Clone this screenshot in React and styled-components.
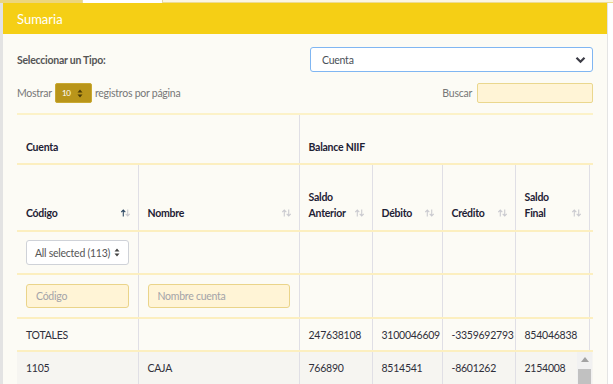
import React from 'react'
import styled, { createGlobalStyle } from 'styled-components'

const GlobalStyle = createGlobalStyle`
	html, body {
		margin: 0;
		padding: 0;
		background: #ffffff;
	}
	body {
		font-family: Lato, "Open Sans", sans-serif;
		font-size: 11px;
		letter-spacing: -0.25px;
		color: #333;
	}
	* { box-sizing: border-box; }
`

const columns = [121, 161, 73, 70, 73, 74, 4]

const SortIcon = ({ active }) => (
	<Sort viewBox="0 0 12 9" width="11" height="8">
		<path d="M3.5 8.5V1.2M1.2 3.5l2.3-2.3 2.3 2.3" fill="none" stroke={active ? '#2b4561' : '#c9c9cf'} strokeWidth="1.2" />
		<path d="M8.5 0.5v7.3M6.2 5.5l2.3 2.3 2.3-2.3" fill="none" stroke="#c9c9cf" strokeWidth="1.2" />
	</Sort>
)

const Chevron = () => (
	<svg width="11" height="8" viewBox="0 0 11 8">
		<path d="M1.5 1.8l4 4 4-4" fill="none" stroke="#3c3c46" strokeWidth="2.2" />
	</svg>
)

const UpDown = ({ color }) => (
	<svg width="6" height="9" viewBox="0 0 6 9">
		<path d="M3 0.5L5.5 3.5H0.5z M3 8.5L5.5 5.5H0.5z" fill={color} />
	</svg>
)

const rows = [
	{ code: 'TOTALES', name: '', prev: '247638108', debit: '3100046609', credit: '-3359692793', final: '854046838' },
	{ code: '1105', name: 'CAJA', prev: '766890', debit: '8514541', credit: '-8601262', final: '2154008', striped: true }
]

const App = () => {
	return (
		<Page>
			<GlobalStyle />
			<TopTabs>
				<TabFill />
				<Tab />
				<TabRest />
			</TopTabs>
			<Panel>
				<Header>Sumaria</Header>
				<Body>
					<TypeRow>
						<Label>Seleccionar un Tipo:</Label>
						<TypeSelect>
							<span>Cuenta</span>
							<Chevron />
						</TypeSelect>
					</TypeRow>
					<ToolsRow>
						<Muted>
							Mostrar
							<PageSize>
								10
								<UpDown color="#4a3b05" />
							</PageSize>
							registros por página
						</Muted>
						<Muted>
							Buscar
							<SearchInput />
						</Muted>
					</ToolsRow>
					<TableWrap>
						<Table>
							<colgroup>
								{columns.map((w, i) => (
									<Col key={i} $w={w} />
								))}
							</colgroup>
							<thead>
								<tr>
									<GroupTh colSpan={2}>Cuenta</GroupTh>
									<GroupTh colSpan={5}>Balance NIIF</GroupTh>
								</tr>
								<tr>
									<Th><ThInner>Código<SortIcon active /></ThInner></Th>
									<Th><ThInner>Nombre<SortIcon /></ThInner></Th>
									<Th><ThInner>Saldo<br />Anterior<SortIcon /></ThInner></Th>
									<Th><ThInner>Débito<SortIcon /></ThInner></Th>
									<Th><ThInner>Crédito<SortIcon /></ThInner></Th>
									<Th><ThInner>Saldo<br />Final<SortIcon /></ThInner></Th>
									<Spacer />
								</tr>
							</thead>
							<tbody>
								<FilterRow>
									<Td>
										<MultiSelect>
											All selected (113)
											<UpDown color="#444" />
										</MultiSelect>
									</Td>
									<Td />
									<Td />
									<Td />
									<Td />
									<Td />
									<Spacer />
								</FilterRow>
								<FilterRow $tall>
									<Td><FilterInput placeholder="Código" /></Td>
									<Td><FilterInput placeholder="Nombre cuenta" /></Td>
									<Td />
									<Td />
									<Td />
									<Td />
									<Spacer />
								</FilterRow>
								{rows.map((r) => (
									<DataRow key={r.code} $striped={r.striped}>
										<Td>{r.code}</Td>
										<Td>{r.name}</Td>
										<Td>{r.prev}</Td>
										<Td>{r.debit}</Td>
										<Td>{r.credit}</Td>
										<Td>{r.final}</Td>
										<Spacer />
									</DataRow>
								))}
							</tbody>
						</Table>
						<ScrollBar>
							<ScrollArrow />
							<ScrollThumb />
						</ScrollBar>
					</TableWrap>
				</Body>
			</Panel>
		</Page>
	)
}

export default App

const Page = styled.div`
	width: 613px;
	height: 384px;
	overflow: hidden;
	background: #ffffff;
`

const TopTabs = styled.div`
	display: flex;
	height: 3px;
`

const TabFill = styled.div`
	width: 82px;
	background: #ecd67e;
`

const Tab = styled.div`
	width: 81px;
	background: #ffffff;
	border-left: 1px solid #e6d9a4;
	border-right: 1px solid #e6d9a4;
`

const TabRest = styled.div`
	flex: 1;
	background: #fbf6e2;
	border-bottom: 1px solid #eddc93;
`

const Panel = styled.div`
	width: 608px;
	height: 381px;
	border-left: 3px solid #e3e3e3;
	border-right: 1px solid #e4e4e4;
	background: #fcfbf5;
`

const Header = styled.div`
	height: 31px;
	background: #f5cf15;
	color: #ffffff;
	font-size: 13px;
	letter-spacing: 0;
	display: flex;
	align-items: center;
	padding-left: 14px;
`

const Body = styled.div`
	padding: 13px 14px 0 14px;
`

const TypeRow = styled.div`
	display: flex;
	justify-content: space-between;
	align-items: center;
	height: 25px;
`

const Label = styled.div`
	font-weight: 700;
	color: #555;
	font-size: 10.5px;
`

const TypeSelect = styled.div`
	width: 283px;
	height: 25px;
	background: #ffffff;
	border: 1px solid #80b6f2;
	border-radius: 3px;
	display: flex;
	align-items: center;
	justify-content: space-between;
	padding: 0 6px 0 11px;
	color: #495057;
	font-size: 10.5px;
`

const ToolsRow = styled.div`
	display: flex;
	justify-content: space-between;
	align-items: center;
	margin-top: 11px;
	height: 20px;
`

const Muted = styled.div`
	display: flex;
	align-items: center;
	gap: 3px;
	color: #777;
	font-size: 10.5px;
`

const PageSize = styled.div`
	width: 37px;
	height: 20px;
	background: #b9951a;
	border: 1px solid #c9a933;
	border-radius: 2px;
	color: #ffffff;
	font-size: 8px;
	display: flex;
	align-items: center;
	justify-content: space-between;
	padding: 0 8px 0 6px;
`

const SearchInput = styled.div`
	width: 116px;
	height: 20px;
	margin-left: 2px;
	background: #fff4d6;
	border: 1px solid #ead78e;
	border-radius: 2px;
`

const TableWrap = styled.div`
	position: relative;
	margin-top: 10px;
`

const Table = styled.table`
	width: 576px;
	table-layout: fixed;
	border-collapse: collapse;
	border-top: 2px solid #fcf2c8;
`

const Col = styled.col`
	width: ${({ $w }) => $w}px;
`

const GroupTh = styled.th`
	height: 50px;
	text-align: left;
	vertical-align: bottom;
	padding: 0 9px 10px;
	font-weight: 700;
	color: #1e2134;
	font-size: 10.5px;
	border-bottom: 2px solid #fcefc0;
	border-right: 1px solid #e0dfe5;
	&:last-child { border-right: none; }
`

const Th = styled.th`
	height: 67px;
	text-align: left;
	vertical-align: bottom;
	padding: 0 8px 9px 9px;
	font-weight: 700;
	color: #1e2134;
	font-size: 10.5px;
	line-height: 16px;
	border-bottom: 2px solid #fcefc0;
	border-right: 1px solid #e0dfe5;
`

const ThInner = styled.div`
	position: relative;
	padding-right: 12px;
`

const Sort = styled.svg`
	position: absolute;
	right: -1px;
	bottom: 4px;
`

const Spacer = styled.td`
	padding: 0;
	border-bottom: 2px solid #fcefc0;
`

const FilterRow = styled.tr`
	height: ${({ $tall }) => ($tall ? '44px' : '43px')};
`

const DataRow = styled.tr`
	height: ${({ $striped }) => ($striped ? '34px' : '33px')};
	background: ${({ $striped }) => ($striped ? '#f6f5f1' : 'transparent')};
`

const Td = styled.td`
	padding: 0 9px;
	color: #2f2f3a;
	font-size: 10.5px;
	border-bottom: 2px solid #fcefc0;
	border-right: 1px solid #e0dfe5;
	white-space: nowrap;
	overflow: hidden;
`

const MultiSelect = styled.div`
	width: 103px;
	height: 25px;
	background: #ffffff;
	border: 1px solid #cfd2d8;
	border-radius: 3px;
	display: flex;
	align-items: center;
	justify-content: space-between;
	padding: 0 8px;
	color: #555;
	font-size: 10.5px;
`

const FilterInput = styled.input`
	width: 100%;
	height: 24px;
	background: #fff4d6;
	border: 1px solid #ead48a;
	border-radius: 3px;
	padding: 0 9px;
	font-family: inherit;
	font-size: 10.5px;
	letter-spacing: -0.25px;
	outline: none;
	&::placeholder { color: #a3a3a8; }
`

const ScrollBar = styled.div`
	position: absolute;
	right: 1px;
	top: 239px;
	width: 15px;
	height: 40px;
	background: #f1f1f1;
`

const ScrollArrow = styled.div`
	margin: 5px auto 0;
	width: 0;
	height: 0;
	border-left: 4px solid transparent;
	border-right: 4px solid transparent;
	border-bottom: 5px solid #a3a3a3;
`

const ScrollThumb = styled.div`
	margin: 7px auto 0;
	width: 13px;
	height: 30px;
	background: #c1c1c1;
`
